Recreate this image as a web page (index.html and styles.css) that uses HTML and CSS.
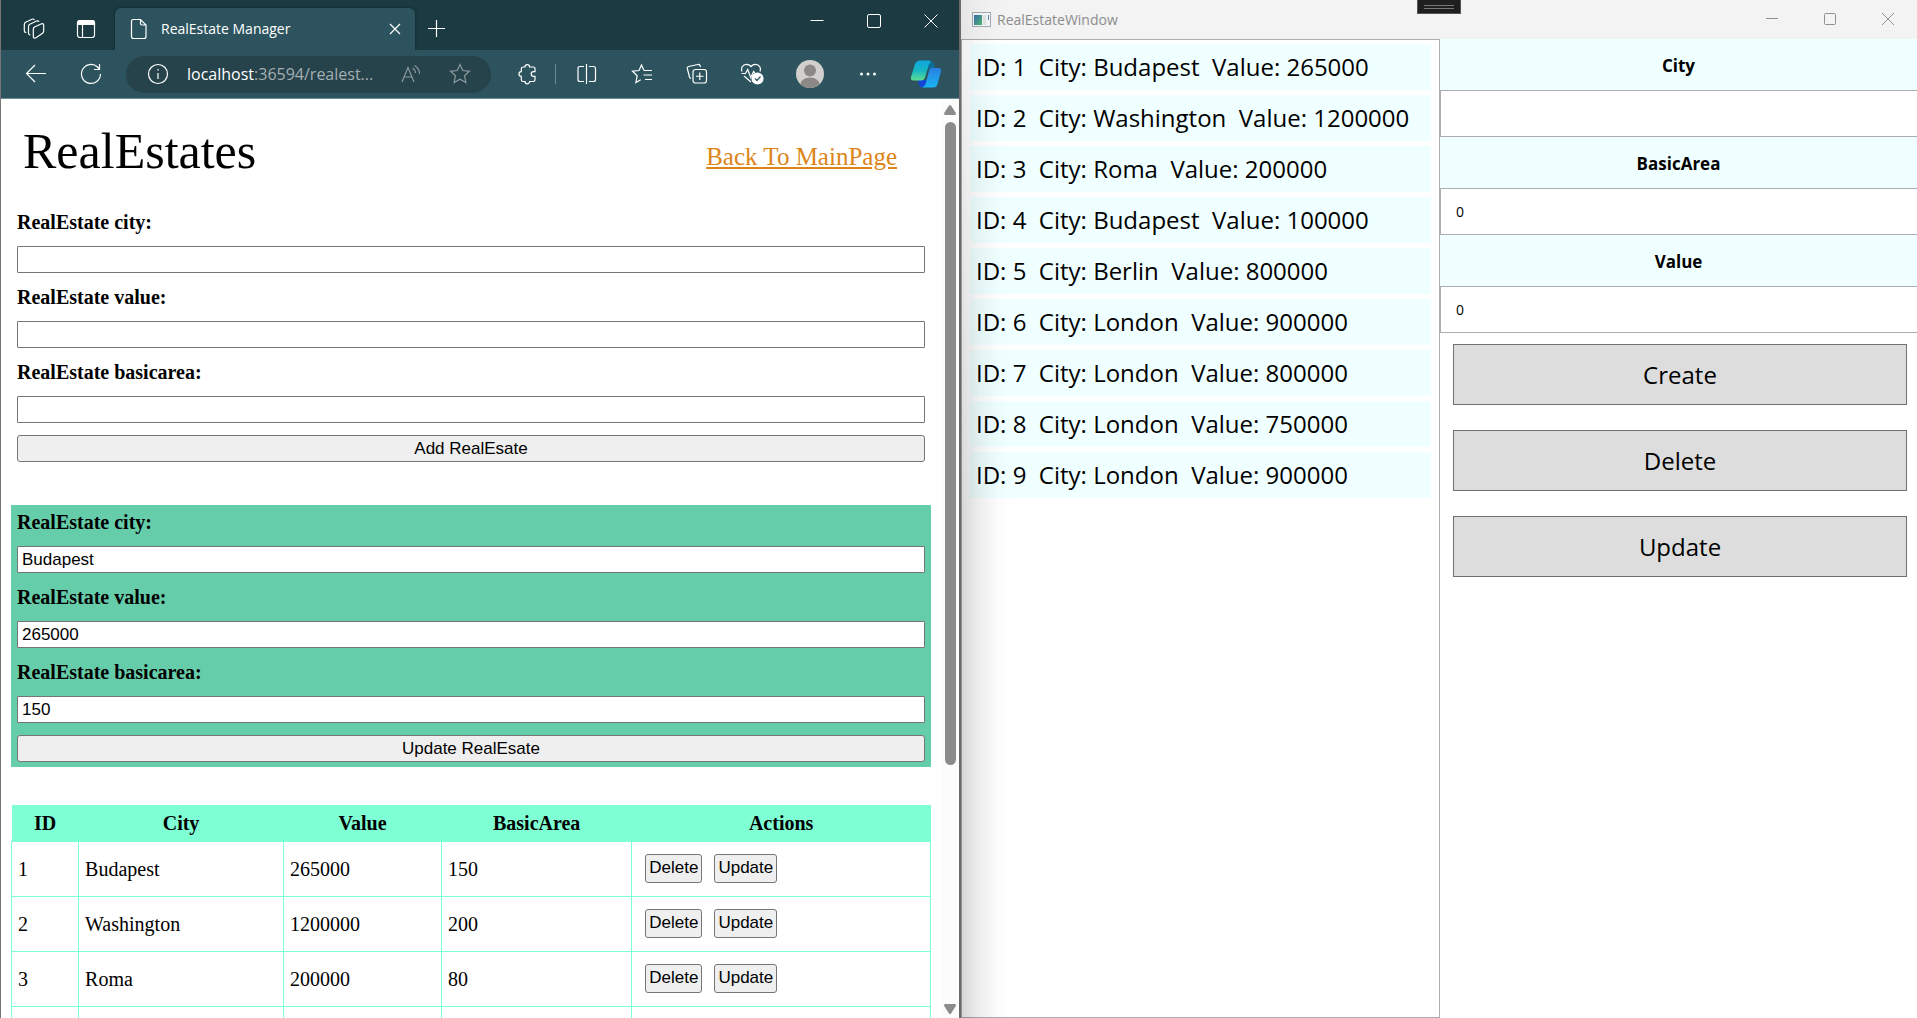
FILE: index.html
```html
<!DOCTYPE html>
<html lang="en">
<head>
<meta charset="utf-8">
<title>RealEstate Manager</title>
<link rel="stylesheet" href="styles.css">
</head>
<body>
<div class="desktop">
  <section class="browser" aria-label="Browser">
    <div class="tabstrip">
      <button class="strip-btn" aria-label="Workspaces"><svg width="22" height="22" viewBox="0 0 22 22"><path d="M11.500 9l6.500-3q2.700-1 2.700 1.500V13q0 1.500-1.500 2.400L13 19.700q-2.700 1.200-2.700-1.500v-7q0-1.500 1.200-2.200zM7.300 16.800q-1.800.2-1.800-1.800V8.500q0-1.500 1.300-2.200L13.500 3q1.800-.7 2.500.8M3.300 14.300Q1.300 14.500 1.300 12.500V6.500q0-1.500 1.300-2.200L9 1.200q1.800-.6 2.500.7"/></svg></button>
      <button class="strip-btn" aria-label="Tab actions"><svg width="20" height="20" viewBox="0 0 20 20"><rect x="1.500" y="1.500" width="17" height="17" rx="2.500"/><path d="M6.500 6v12"/><path class="solid" d="M1.500 5.500V4q0-2.500 2.500-2.500h12q2.500 0 2.500 2.500v1.500z"/></svg></button>
      <div class="tab">
        <svg width="18" height="22" viewBox="0 0 18 22"><path d="M3.500 1.500h7l5.500 5.500v11.500q0 2-2 2H3.500q-2 0-2-2v-15q0-2 2-2zM10.500 1.500v4q0 1.500 1.500 1.500h4"/></svg>
        <span class="tab-title">RealEstate Manager</span>
        <button class="tab-close" aria-label="Close tab"><svg width="12" height="12" viewBox="0 0 12 12"><path d="M1 1l10 10M11 1L1 11"/></svg></button>
      </div>
      <button class="new-tab" aria-label="New tab"><svg width="18" height="18" viewBox="0 0 18 18"><path d="M8.500 0v17M0 8.500h17"/></svg></button>
      <div class="win-controls">
        <button aria-label="Minimize"><svg width="14" height="14" viewBox="0 0 14 14"><path d="M.5 6.500h13"/></svg></button>
        <button aria-label="Maximize"><svg width="14" height="14" viewBox="0 0 14 14"><rect x=".5" y=".5" width="13" height="13" rx="1.500"/></svg></button>
        <button aria-label="Close"><svg width="14" height="14" viewBox="0 0 14 14"><path d="M.5 .5l13 13M13.500 .5l-13 13"/></svg></button>
      </div>
    </div>
    <div class="toolbar">
      <button class="tool" aria-label="Back"><svg width="22" height="20" viewBox="0 0 22 20"><path d="M21 9.500H1.500M10 1L1.500 9.500 10 18"/></svg></button>
      <button class="tool" aria-label="Refresh"><svg width="22" height="22" viewBox="0 0 22 22"><path d="M20.500 11A9.500 9.500 0 1 1 17.500 4l1.800 2M19.500 1v5.500H14"/></svg></button>
      <div class="address">
        <svg class="info" width="22" height="22" viewBox="0 0 22 22"><circle cx="11" cy="11" r="9.500"/><path d="M11 10v6M11 6v1.500"/></svg>
        <span class="url"><b>localhost</b>:36594/realest...</span>
        <button class="dim" aria-label="Read aloud"><svg width="20" height="20" viewBox="0 0 20 20"><path d="M1 18L7 3.500 13 18M3 13h8M11.500 4q3 2 3 5M13.500 1.500q5 3 5 8.500" /></svg></button>
        <button class="dim" aria-label="Add to favourites"><svg width="22" height="22" viewBox="0 0 22 22"><path d="M11 1.500l2.800 6 6.700.8-5 4.500 1.400 6.700-5.900-3.300-5.900 3.300 1.400-6.700-5-4.500 6.700-.8z"/></svg></button>
      </div>
      <button class="tool" aria-label="Extensions"><svg width="20" height="22" viewBox="0 0 20 22"><path d="M6 4h2a2.300 2.300 0 1 1 4.600 0h3.700q1.700 0 1.700 1.700v3h-1.500a2.200 2.200 0 0 0 0 4.600H18v3.500q0 1.700-1.700 1.700h-3.700a2.300 2.300 0 0 1-4.600 0H6q-1.700 0-1.700-1.700v-3.400a2.300 2.300 0 0 1 0-4.700v-3Q4.300 4 6 4z"/></svg></button>
      <span class="divider"></span>
      <button class="tool" aria-label="Split screen"><svg width="20" height="22" viewBox="0 0 20 22"><path d="M9.500 1v20M7 3.500H3q-2 0-2 2v11q0 2 2 2h4M12 3.500h4.500q2 0 2 2v11q0 2-2 2H12"/></svg></button>
      <button class="tool" aria-label="Favourites"><svg width="22" height="22" viewBox="0 0 22 22"><path d="M13 7.500L10.500 2 8 7.500l-6.500.7 4.700 4.500-1.300 6.800 4.800-2.800M13 7.500h8M12.500 12H21M14 16.500h7"/></svg></button>
      <button class="tool" aria-label="Collections"><svg width="22" height="22" viewBox="0 0 22 22"><rect x="7" y="6.500" width="13.500" height="13.500" rx="2.500"/><path d="M13.750 9.500v7.500M10 13.250h7.500M14.500 4l-.5-1.500q-.5-1.300-2-1L2.500 3.500q-1.500.5-1.200 2L3.500 14q.3 1.200 1.500 1.500"/></svg></button>
      <button class="tool" aria-label="Browser essentials"><svg width="24" height="24" viewBox="0 0 24 24"><path d="M2 9.500Q.5 5 4 3q4-2 7 1.500Q14 1 18 3q3.500 2 2 6.500M1.500 11.500h4l2.200-4 3 8 3-6 1.500 2H19M4 14l7 6"/><circle class="solid" cx="17.500" cy="16.500" r="5.500"/><path class="check" d="M15 16.500l2 2 3.500-4"/></svg></button>
      <div class="tool-end">
        <button class="tool wide" aria-label="Profile"><svg width="28" height="28" viewBox="0 0 28 28"><clipPath id="face"><circle cx="14" cy="14" r="14"/></clipPath><g clip-path="url(#face)"><path fill="#d2d0ce" stroke="none" d="M0 0h28v28H0z"/><circle cx="14" cy="10.500" r="6" fill="#8c8886" stroke="none"/><ellipse cx="14" cy="25.500" rx="10" ry="8" fill="#8c8886" stroke="none"/></g></svg></button>
        <button class="tool wide" aria-label="Settings and more"><svg width="18" height="4" viewBox="0 0 18 4"><g fill="#fff" stroke="none"><circle cx="2.500" cy="2" r="1.500"/><circle cx="9" cy="2" r="1.500"/><circle cx="15.500" cy="2" r="1.500"/></g></svg></button>
        <button class="tool wide" aria-label="Copilot"><svg width="32" height="28" viewBox="0 0 32 28"><defs><linearGradient id="c1" x2="0" y2="1"><stop stop-color="#0fa5e0"/><stop offset=".5" stop-color="#15b7c4"/><stop offset="1" stop-color="#5fdc92"/></linearGradient><linearGradient id="c2" x2="0" y2="1"><stop stop-color="#2a7fe0"/><stop offset="1" stop-color="#18b4f6"/></linearGradient></defs><g stroke="none"><path fill="#0b6d98" d="M17 1h4q2 0 3 3l1 4h-4q-3 0-4 3z"/><path fill="#1546d8" d="M8 20h9l-2 5q-1 2.500-3 2.500T9 25z"/><path fill="url(#c1)" d="M10 .5h9q2 0 1.500 2-1.500 1-2 3l-3.500 12q-1 3-4 3H3.500Q.3 20.500 1 17L5 4Q6.500.5 10 .5z"/><path fill="url(#c2)" d="M21 8h7.500q3 0 2.500 3.500L27.500 24q-1 3.500-4.500 3.500H12q2.500-.5 3.500-3.500L19 11q.5-2 2-3z"/></g></svg></button>
      </div>
    </div>
    <div class="viewport">
      <main class="page">
        <header class="page-head">
          <h1>RealEstates</h1>
          <a href="#">Back To MainPage</a>
        </header>
        <form class="estate-form">
          <label for="add-city">RealEstate city:</label>
          <input id="add-city" type="text">
          <label for="add-value">RealEstate value:</label>
          <input id="add-value" type="text">
          <label for="add-area">RealEstate basicarea:</label>
          <input id="add-area" type="text">
          <button type="button">Add RealEsate</button>
        </form>
        <form class="estate-form editing">
          <label for="upd-city">RealEstate city:</label>
          <input id="upd-city" type="text" value="Budapest">
          <label for="upd-value">RealEstate value:</label>
          <input id="upd-value" type="text" value="265000">
          <label for="upd-area">RealEstate basicarea:</label>
          <input id="upd-area" type="text" value="150">
          <button type="button">Update RealEsate</button>
        </form>
        <table class="estates">
          <colgroup><col class="c-id"><col class="c-city"><col class="c-value"><col class="c-area"><col></colgroup>
          <thead><tr><th>ID</th><th>City</th><th>Value</th><th>BasicArea</th><th>Actions</th></tr></thead>
          <tbody>
            <tr><td>1</td><td>Budapest</td><td>265000</td><td>150</td><td><div class="actions"><button type="button">Delete</button><button type="button">Update</button></div></td></tr>
            <tr><td>2</td><td>Washington</td><td>1200000</td><td>200</td><td><div class="actions"><button type="button">Delete</button><button type="button">Update</button></div></td></tr>
            <tr><td>3</td><td>Roma</td><td>200000</td><td>80</td><td><div class="actions"><button type="button">Delete</button><button type="button">Update</button></div></td></tr>
            <tr><td></td><td></td><td></td><td></td><td></td></tr>
          </tbody>
        </table>
      </main>
      <div class="scrollbar">
        <svg width="12" height="10" viewBox="0 0 12 10"><path d="M6 0q.6 0 1 .6l4.800 7.400q.5 1.700-.8 2H1Q-.3 9.700.2 8L5 .6Q5.400 0 6 0z"/></svg>
        <div class="track"><div class="thumb"></div></div>
        <svg width="12" height="10" viewBox="0 0 12 10"><path d="M6 10q.6 0 1-.6L11.800 2Q12.300.3 11 0H1Q-.3.3.2 2L5 9.400q.4.600 1 .6z"/></svg>
      </div>
    </div>
  </section>

  <section class="app" aria-label="RealEstateWindow">
    <div class="titlebar">
      <svg width="19" height="15" viewBox="0 0 19 15"><defs><linearGradient id="w" x2="1" y2="1"><stop stop-color="#3a6fb0"/><stop offset="1" stop-color="#4fb870"/></linearGradient></defs><rect x=".5" y=".5" width="18" height="14" fill="#f4f6f7" stroke="#a3abb5"/><path fill="url(#w)" d="M2 3h8v10H2z"/><path fill="#dfe3e2" d="M11 3h3v10h-3z"/><path fill="#4b8ab0" d="M16 3h1v5h-1z"/></svg>
      <span class="app-title">RealEstateWindow</span>
      <div class="win-controls">
        <button aria-label="Minimize"><svg width="12" height="12" viewBox="0 0 12 12"><path d="M0 5.500h12"/></svg></button>
        <button aria-label="Maximize"><svg width="12" height="12" viewBox="0 0 12 12"><rect x=".5" y=".5" width="11" height="11" rx="1"/></svg></button>
        <button aria-label="Close"><svg width="12" height="12" viewBox="0 0 12 12"><path d="M0 0l12 12M12 0L0 12"/></svg></button>
      </div>
      <div class="debug-handle"></div>
    </div>
    <div class="app-body">
      <ul class="listbox">
        <li>ID: 1  City: Budapest  Value: 265000</li>
        <li>ID: 2  City: Washington  Value: 1200000</li>
        <li>ID: 3  City: Roma  Value: 200000</li>
        <li>ID: 4  City: Budapest  Value: 100000</li>
        <li>ID: 5  City: Berlin  Value: 800000</li>
        <li>ID: 6  City: London  Value: 900000</li>
        <li>ID: 7  City: London  Value: 800000</li>
        <li>ID: 8  City: London  Value: 750000</li>
        <li>ID: 9  City: London  Value: 900000</li>
      </ul>
      <form class="editor">
        <label for="city">City</label>
        <input id="city" type="text">
        <label for="area">BasicArea</label>
        <input id="area" type="text" value="0">
        <label for="value">Value</label>
        <input id="value" type="text" value="0">
        <div class="editor-actions">
          <button type="button">Create</button>
          <button type="button">Delete</button>
          <button type="button">Update</button>
        </div>
      </form>
    </div>
  </section>
</div>
</body>
</html>
```

FILE: styles.css
```css
* { box-sizing: border-box; }

body {
  margin: 0;
  background: #fff;
  color: #000;
}

button, input { font: inherit; color: inherit; }

.desktop {
  display: grid;
  grid-template-columns: 961fr 956fr;
  height: 100vh;
  overflow: hidden;
  font-family: "Open Sans", "Noto Sans", sans-serif;
}

/* Browser window */
.browser {
  display: flex;
  flex-direction: column;
  min-width: 0;
  min-height: 0;
  border-left: 1px solid #767676;
  border-right: 2px solid #6a6a6a;
}

.tabstrip button, .toolbar button, .titlebar button {
  display: flex;
  align-items: center;
  justify-content: center;
  padding: 0;
  border: 0;
  background: none;
}

.tabstrip svg, .toolbar svg {
  flex: none;
  fill: none;
  stroke: #fff;
  stroke-width: 1.2;
}

.tabstrip svg .solid, .toolbar svg .solid { fill: #fff; }
.toolbar svg .check { stroke: #2d545e; }

.tabstrip {
  display: flex;
  align-items: flex-end;
  height: 50px;
  padding-left: 7px;
  background: #1b3a41;
}

.tabstrip .strip-btn {
  width: 52px;
  height: 42px;
}

.tab {
  display: flex;
  align-items: center;
  width: 300px;
  height: 42px;
  margin-left: 3px;
  padding: 0 13px 0 15px;
  border-radius: 6px 6px 0 0;
  background: #2d545e;
  box-shadow: 0 0 3px #10272c;
}

.tab-title {
  flex: 1;
  margin-left: 13px;
  color: #fff;
  font-size: 14px;
  line-height: 20px;
}

.tabstrip .tab-close { width: 14px; height: 24px; }
.tabstrip .new-tab { width: 44px; height: 42px; }

.win-controls {
  display: flex;
  align-self: flex-start;
  margin-left: auto;
}

.tabstrip .win-controls button { width: 57px; height: 42px; }
.tabstrip .win-controls svg { stroke-width: 1; }

.toolbar {
  display: flex;
  align-items: center;
  height: 49px;
  padding: 0 4px 0 7px;
  border-bottom: 1px solid #6f8b93;
  background: #2d545e;
  position: relative;
}

.toolbar .tool { width: 55px; height: 40px; flex: none; }
.toolbar .wide { width: 58px; }
.tool-end { display: flex; margin-left: 2px; }

.divider {
  width: 1px;
  height: 20px;
  margin: 0 3px 0 1px;
  background: #6f8b93;
}

.address {
  display: flex;
  flex: 1;
  align-items: center;
  min-width: 0;
  height: 37px;
  margin: 0 8px;
  padding: 0 7px 0 21px;
  border-radius: 19px;
  background: #26424a;
}

.url {
  flex: 1;
  overflow: hidden;
  margin-left: 18px;
  color: #a3afb2;
  font-size: 16px;
  line-height: 24px;
  white-space: nowrap;
}

.url b { color: #fff; font-weight: 400; }

.toolbar .dim { width: 49px; height: 37px; flex: none; }
.toolbar .dim svg { stroke: #8b999d; }

/* Web page */
.viewport {
  display: flex;
  flex: 1;
  min-height: 0;
}

.page {
  flex: 1;
  min-width: 0;
  overflow: hidden;
  padding: 0 10px;
  font-family: "Liberation Serif", "Times New Roman", serif;
  font-size: 20px;
  line-height: 24px;
}

.page-head {
  display: flex;
  align-items: flex-end;
  justify-content: space-between;
  padding: 23px 34px 25px 12px;
}

.page-head h1 {
  margin: 0;
  font-size: 50px;
  font-weight: 400;
  line-height: 58px;
}

.page-head a {
  color: #dd8519;
  font-size: 25px;
  line-height: 30px;
  padding-bottom: 8px;
}

.estate-form {
  display: flex;
  flex-direction: column;
  gap: 12px;
  padding: 5px 6px;
  margin-bottom: 38px;
}

.editing { background: #66cdaa; }

.estate-form label { font-weight: 700; }

.estate-form input, .estate-form button, .actions button {
  border: 1px solid #767676;
  border-radius: 3px;
  font-family: "Liberation Sans", Arial, sans-serif;
  font-size: 17px;
}

.estate-form input {
  width: 100%;
  height: 27px;
  padding: 0 4px;
  border-radius: 1px;
  background: #fff;
}

.estate-form button {
  height: 27px;
  padding: 0;
  background: #efefef;
}

.estates {
  width: 100%;
  table-layout: fixed;
  border-collapse: collapse;
}

.estates th { height: 36px; padding: 0; background: #7fffd4; }
.estates td { height: 55px; padding: 0 6px; border: 1px solid #7fffd4; }

.c-id { width: 7.3%; }
.c-city { width: 22.3%; }
.c-value { width: 17.2%; }
.c-area { width: 20.7%; }

.actions { display: flex; gap: 12px; padding-left: 7px; }

.actions button {
  height: 29px;
  padding: 0 3px 1px;
  background: #efefef;
}

.scrollbar {
  display: flex;
  flex-direction: column;
  align-items: center;
  gap: 7px;
  width: 18px;
  padding: 6px 0 4px;
  background: #fcfcfc;
}

.scrollbar svg { flex: none; fill: #8b8b8b; }

.track { flex: 1; width: 11px; }

.thumb {
  height: 73.5%;
  border-radius: 6px;
  background: #8b8b8b;
}

/* Desktop application window */
.app {
  display: flex;
  flex-direction: column;
  min-width: 0;
  min-height: 0;
  position: relative;
}

/* Shadow cast by the browser window */
.app::after {
  content: "";
  position: absolute;
  inset: 0 auto 0 0;
  width: 50px;
  background: linear-gradient(to right, rgba(0, 0, 0, .16), rgba(0, 0, 0, .07) 35%, rgba(0, 0, 0, .01) 75%, transparent);
  mask-image: linear-gradient(rgba(0, 0, 0, .3), #000 50%);
  pointer-events: none;
}

.titlebar {
  display: flex;
  align-items: center;
  height: 39px;
  padding-left: 11px;
  background: #f3f3f3;
  position: relative;
}

.app-title {
  margin-left: 6px;
  color: #8c8c8c;
  font-size: 14px;
  line-height: 20px;
}

.titlebar .win-controls button { width: 58px; height: 38px; }
.titlebar .win-controls svg { fill: none; stroke: #909090; }

.debug-handle {
  position: absolute;
  top: 0;
  left: 50%;
  width: 44px;
  height: 14px;
  transform: translateX(-50%);
  border: 1px solid #555;
  border-top: 0;
  background: linear-gradient(#777, #777) center 5px / 30px 1px no-repeat,
              linear-gradient(#777, #777) center 8px / 30px 1px no-repeat, #1f1f1f;
}

.app-body {
  display: grid;
  grid-template-columns: 479fr 477fr;
  flex: 1;
  min-height: 0;
}

.listbox {
  display: flex;
  flex-direction: column;
  gap: 5px;
  margin: 0;
  padding: 4px 8px;
  border: 1px solid #abadb3;
  list-style: none;
}

.listbox li {
  padding: 0 6px;
  background: #f0ffff;
  font-size: 24px;
  line-height: 46px;
  white-space: pre;
}

.editor { display: flex; flex-direction: column; }

.editor label {
  padding-top: 2px;
  background: #f0ffff;
  font-size: 17px;
  font-weight: 700;
  line-height: 49px;
  text-align: center;
}

.editor input {
  height: 47px;
  padding: 0 15px;
  border: 1px solid #abadb3;
  border-right: 0;
  border-radius: 0;
  background: #fff;
  font-size: 14px;
}

.editor-actions {
  display: flex;
  flex-direction: column;
  gap: 25px;
  padding: 11px 10px 0 13px;
}

.editor-actions button {
  height: 61px;
  padding: 0;
  border: 1px solid #707070;
  background: #ddd;
  font-size: 24px;
}
```
